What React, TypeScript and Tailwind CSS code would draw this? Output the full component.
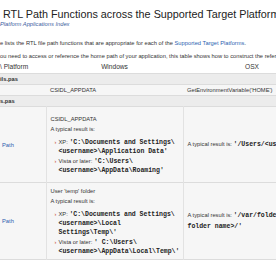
export default function App() {
  const mono = "font-['Liberation_Mono','Courier_New',monospace] font-bold text-[6.5px] text-[#222]";
  return (
    <div className="w-[276px] h-[260px] overflow-hidden bg-white text-[#333] font-['Liberation_Sans',Arial,sans-serif]">
      <h1 className="pl-[3px] pt-[7px] text-[10.8px] leading-[14px] font-normal text-[#222] whitespace-nowrap">
        RTL Path Functions across the Supported Target Platforms
      </h1>
      <p className="text-[5.75px] leading-[6px] italic text-[#3b5da0] whitespace-nowrap">Platform Applications Index</p>
      <p className="mt-[11px] text-[5.75px] leading-[10px] whitespace-nowrap">
        e lists the RTL file path functions that are appropriate for each of the{" "}
        <span className="text-[#2c5fb0]">Supported Target Platforms</span>.
      </p>
      <p className="mt-[3px] text-[5.75px] leading-[10px] whitespace-nowrap">
        ou need to access or reference the home path of your application, this table shows how to construct the reference path.
      </p>
      <table className="table-fixed border-collapse w-[321px] text-[5.75px]">
        <colgroup>
          <col className="w-[46px]" />
          <col className="w-[137px]" />
          <col className="w-[138px]" />
        </colgroup>
        <thead>
          <tr className="h-[12px] bg-white border-b border-[#dcdcdc]">
            <th className="text-left font-normal text-[6.6px] leading-[12px] whitespace-nowrap">\ Platform</th>
            <th className="text-center font-normal text-[6.6px] leading-[12px]">Windows</th>
            <th className="text-center font-normal text-[6.6px] leading-[12px]">OSX</th>
          </tr>
        </thead>
        <tbody>
          <tr className="h-[10px] bg-[#ececec] border-b border-[#dcdcdc]">
            <td colSpan={3} className="font-bold leading-[10px] whitespace-nowrap">ils.pas</td>
          </tr>
          <tr className="h-[11px] bg-[#f6f6f6] border-b border-[#dcdcdc]">
            <td></td>
            <td className="px-[4px] leading-[10px] whitespace-nowrap">CSIDL_APPDATA</td>
            <td className="px-[4px] leading-[10px] whitespace-nowrap">GetEnvironmentVariable('HOME')</td>
          </tr>
          <tr className="h-[10px] bg-[#ececec] border-b border-[#dcdcdc]">
            <td colSpan={3} className="font-bold leading-[10px] whitespace-nowrap">s.pas</td>
          </tr>
          <tr className="h-[76px] bg-[#f6f6f6] border-b border-[#dcdcdc]">
            <td className="pl-[2px] align-middle text-[#2c5fb0] leading-[10px]">Path</td>
            <td className="px-[4px] align-middle border-l border-[#e2e2e2]">
              <p className="leading-[10px]">CSIDL_APPDATA</p>
              <p className="leading-[10px]">A typical result is:</p>
              <ul className="mt-[4px] pl-[4px]">
                <li className="flex leading-[8px]">
                  <span className="w-[4px] shrink-0 text-[#c0392b]">›</span>
                  <span className="whitespace-nowrap">
                    XP: <span className={mono}>'C:\Documents and Settings\</span>
                    <br />
                    <span className={mono}>&lt;username&gt;\Application Data'</span>
                  </span>
                </li>
                <li className="flex leading-[8px] mt-[1px]">
                  <span className="w-[4px] shrink-0 text-[#c0392b]">›</span>
                  <span className="whitespace-nowrap">
                    Vista or later: <span className={mono}>'C:\Users\</span>
                    <br />
                    <span className={mono}>&lt;username&gt;\AppData\Roaming'</span>
                  </span>
                </li>
              </ul>
            </td>
            <td className="px-[4px] align-middle border-l border-[#e2e2e2] leading-[10px] whitespace-nowrap">
              A typical result is: <span className={mono}>'/Users/&lt;username&gt;'</span>
            </td>
          </tr>
          <tr className="h-[77px] bg-[#f6f6f6] border-b border-[#dcdcdc]">
            <td className="pl-[2px] align-middle text-[#2c5fb0] leading-[10px]">Path</td>
            <td className="px-[4px] align-middle border-l border-[#e2e2e2]">
              <p className="leading-[10px]">User 'temp' folder</p>
              <p className="leading-[10px]">A typical result is:</p>
              <ul className="mt-[4px] pl-[4px]">
                <li className="flex leading-[8px]">
                  <span className="w-[4px] shrink-0 text-[#c0392b]">›</span>
                  <span className="whitespace-nowrap">
                    XP: <span className={mono}>'C:\Documents and Settings\</span>
                    <br />
                    <span className={mono}>&lt;username&gt;\Local</span>
                    <br />
                    <span className={mono}>Settings\Temp\'</span>
                  </span>
                </li>
                <li className="flex leading-[8px] mt-[1px]">
                  <span className="w-[4px] shrink-0 text-[#c0392b]">›</span>
                  <span className="whitespace-nowrap">
                    Vista or later: <span className={mono}>' C:\Users\</span>
                    <br />
                    <span className={mono}>&lt;username&gt;\AppData\Local\Temp\'</span>
                  </span>
                </li>
              </ul>
            </td>
            <td className="px-[4px] align-middle border-l border-[#e2e2e2] leading-[10px] whitespace-nowrap">
              A typical result is: <span className={mono}>'/var/folders/&lt;random</span>
              <br />
              <span className={mono}>folder name&gt;/'</span>
            </td>
          </tr>
        </tbody>
      </table>
    </div>
  );
}
